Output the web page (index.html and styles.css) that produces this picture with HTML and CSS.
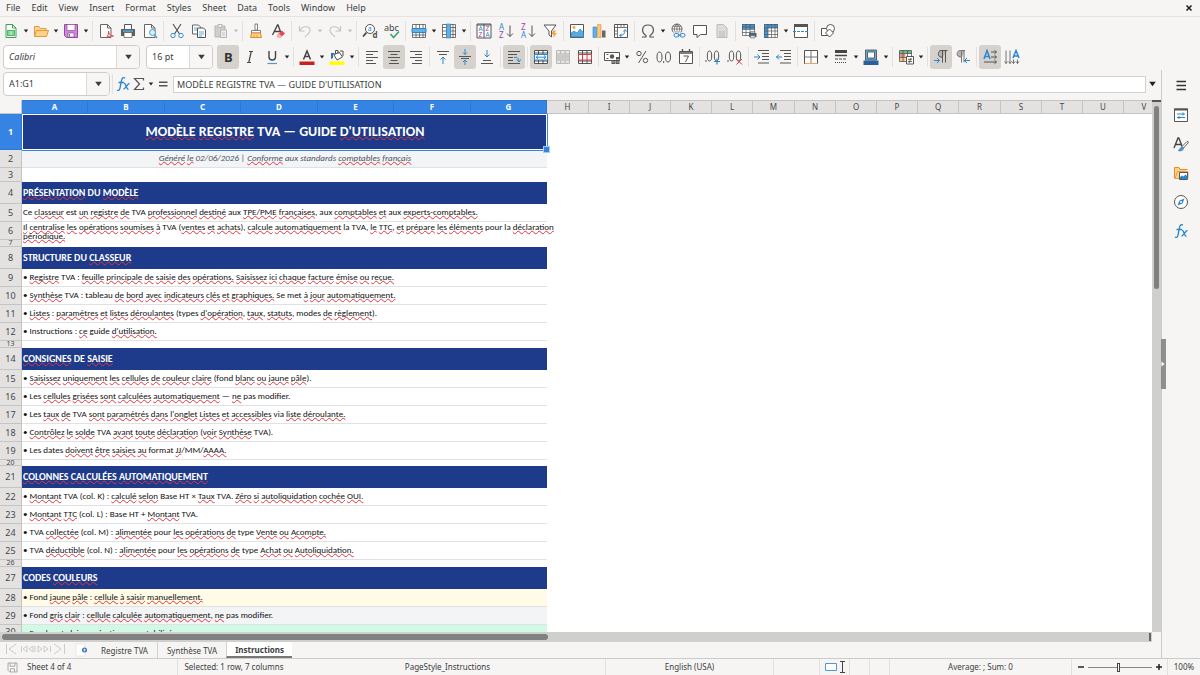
FILE: index.html
```html
<!DOCTYPE html>
<html lang="fr">
<head>
<meta charset="utf-8">
<title>Registre TVA</title>
<link rel="stylesheet" href="styles.css">
</head>
<body>
<svg class="defs" aria-hidden="true">
  <symbol id="dd" viewBox="0 0 6 4"><path d="M.8.5h4.4L3 3.5z" fill="currentColor"/></symbol>
  <symbol id="new" viewBox="0 0 16 16"><path d="M3 1.5h6.500L13 5v9.500H3z" fill="#fff" stroke="#38a352"/><path d="M9.500 1.500V5H13" fill="none" stroke="#38a352"/><path d="M4 7h8v6H4z" fill="#4fb864"/><path d="M5 9h6M5 11h6M8 8v4" stroke="#fff" stroke-width=".7"/></symbol>
  <symbol id="open" viewBox="0 0 16 16"><path d="M1.500 13.500V3.500H6l1.500 2H13v2" fill="#fbd38c" stroke="#e39b3b"/><path d="M1.500 13.500l2-6h12l-2 6z" fill="#fbd38c" stroke="#e39b3b"/></symbol>
  <symbol id="save" viewBox="0 0 16 16"><path d="M1.500 1.500h13v13h-11l-2-2z" fill="#c98bd3" stroke="#9a44a8"/><path d="M4 1.500h8v6H4z" fill="#fff" stroke="#9a44a8" stroke-width=".7"/><path d="M5 10h6v4H5z" fill="#fff" stroke="#9a44a8" stroke-width=".7"/><path d="M6.500 11v2.500" stroke="#777"/></symbol>
  <symbol id="pdf" viewBox="0 0 16 16"><path d="M2.500 1.500h7L13 5v9.500H2.500z" fill="#fbfbfb" stroke="#666"/><path d="M9.500 1.500V5H13" fill="none" stroke="#666"/><path d="M8 15c2-2 3-5 2.500-7 0 3 2 5 5 5-3-.5-5.500.5-7.500 2z" fill="#fff" stroke="#d8434e"/></symbol>
  <symbol id="print" viewBox="0 0 16 16"><path d="M4.500 6V1.500h7V6" fill="#fff" stroke="#555"/><path d="M1 6h14v7H1z" fill="#5b6065"/><path d="M4 9.500h8v5H4z" fill="#fff" stroke="#555" stroke-width=".7"/><path d="M3 8h10" stroke="#5aa7dd" stroke-width="1.500"/></symbol>
  <symbol id="preview" viewBox="0 0 16 16"><path d="M2.500 1.500h7L13 5v9.500H2.500z" fill="#fff" stroke="#666"/><path d="M9.500 1.500V5H13" fill="none" stroke="#666"/><circle cx="10.500" cy="9.500" r="3" fill="#d8ecf9" stroke="#4a9bd3"/><path d="M12.700 11.800L15 15" stroke="#4a9bd3" stroke-width="1.300"/></symbol>
  <symbol id="cut" viewBox="0 0 16 16"><path d="M4 1l6.500 10M12 1L5.500 11" stroke="#555" stroke-width="1.200"/><circle cx="4" cy="12.500" r="2.200" fill="none" stroke="#3a92d5"/><circle cx="12" cy="12.500" r="2.200" fill="none" stroke="#3a92d5"/></symbol>
  <symbol id="copy" viewBox="0 0 16 16"><path d="M1.500 2h6l2 2v7h-8z" fill="#fff" stroke="#666"/><path d="M6.500 5h6l2 2v7.500h-8z" fill="#fff" stroke="#555"/><path d="M3 5h3M3 7h3M8 9h5M8 11h5M8 13h3" stroke="#3a92d5" stroke-width=".8"/></symbol>
  <symbol id="paste" viewBox="0 0 16 16"><path d="M2 3h10v11H2z" fill="#cfcfce" stroke="#b5b5b5"/><path d="M5 1.500h4v3H5z" fill="#eee" stroke="#b5b5b5"/><path d="M7.500 7h6v7.500h-6z" fill="#eee" stroke="#b5b5b5"/><path d="M9 10h3M9 12h3" stroke="#c5c5c5"/></symbol>
  <symbol id="brush" viewBox="0 0 16 16"><path d="M7 1h2.500v6H7z" fill="#fff" stroke="#666" stroke-width=".8"/><path d="M3.500 7.500h9V10h-9z" fill="#fff" stroke="#666" stroke-width=".8"/><path d="M3.500 10h9l1 4.500h-11z" fill="#fbd38c" stroke="#e28e2e"/><path d="M6 12v2M9 12v2" stroke="#e28e2e" stroke-width=".7"/></symbol>
  <symbol id="clear" viewBox="0 0 16 16"><path d="M2.500 12L7.500 2h.5l3 8M4.500 8.500H10" fill="none" stroke="#444" stroke-width="1.300"/><path d="M7 12l5-4.500 3 3-5 4.500H8z" fill="#e44852"/><path d="M7 12l2-1.500 3 3-2 1.500H8z" fill="#f8b1b5"/></symbol>
  <symbol id="undo" viewBox="0 0 16 16"><path d="M2.500 3v5h5M3 7.500C5 3 13 2 13 7.500 13 10 10 12 8 14" fill="none" stroke="#c6c6c5" stroke-width="1.200"/></symbol>
  <symbol id="redo" viewBox="0 0 16 16"><path d="M13.500 3v5h-5M13 7.500C11 3 3 2 3 7.500 3 10 6 12 8 14" fill="none" stroke="#c6c6c5" stroke-width="1.200"/></symbol>
  <symbol id="find" viewBox="0 0 16 16"><circle cx="8" cy="6" r="4.500" fill="#fff" stroke="#555"/><path d="M4.500 9.500L1 13.500" stroke="#444" stroke-width="1.800"/><text x="5.800" y="8.300" font-size="7" fill="#2d86cc">a</text><text x="10.500" y="15" font-size="8" font-weight="bold" fill="#555">d</text></symbol>
  <symbol id="abc" viewBox="0 0 16 16"><text x="0" y="7.500" font-size="9" fill="#444">abc</text><path d="M6.500 11l3 3.500 5.500-6" fill="none" stroke="#38a36c" stroke-width="1.500"/></symbol>
  <symbol id="rowi" viewBox="0 0 16 16"><path d="M1.500 1.500h13v13h-13z" fill="#fff"/><path d="M1.500 1.500h13v13h-13zM1 5.500h14M1 9.500h14M1 12h14M5 1v14M8.500 1v14M12 1v14" fill="none" stroke="#555" stroke-width=".8"/><path d="M1 5.500h14v4H1z" fill="#63b0e8" stroke="#2f83c7"/></symbol>
  <symbol id="coli" viewBox="0 0 16 16"><path d="M1.500 1.500h13v13h-13z" fill="#fff"/><path d="M1.500 1.500h13v13h-13zM1 4.500h14M1 8h14M1 11.500h14M5.500 1v14M9.500 1v14M12 1v14" fill="none" stroke="#555" stroke-width=".8"/><path d="M5.500 1h4v14h-4z" fill="#63b0e8" stroke="#2f83c7" stroke-width=".6"/></symbol>
  <symbol id="sort" viewBox="0 0 16 16"><path d="M1 1h14v14H1z" fill="#fff" stroke="#555"/><path d="M1 2h14M8 1v14" stroke="#555"/><g font-size="6.500"><text x="2.500" y="8.300" fill="#2d86cc">A</text><text x="2.500" y="14.200" fill="#a044a8">Z</text><text x="9.500" y="8.300" fill="#a044a8">Z</text><text x="9.500" y="14.200" fill="#2d86cc">A</text></g></symbol>
  <symbol id="asc" viewBox="0 0 16 16"><g font-size="8"><text x="1" y="7" fill="#2d86cc">A</text><text x="1" y="15" fill="#a044a8">Z</text></g><path d="M12 2.500v11M9 10.500l3 3 3-3" fill="none" stroke="#555"/></symbol>
  <symbol id="desc" viewBox="0 0 16 16"><g font-size="8"><text x="1" y="7" fill="#a044a8">Z</text><text x="1" y="15" fill="#2d86cc">A</text></g><path d="M12 2.500v11M9 10.500l3 3 3-3" fill="none" stroke="#555"/></symbol>
  <symbol id="filter" viewBox="0 0 16 16"><path d="M2 2h12L9.500 8v6L7 12V8z" fill="#fff" stroke="#555"/><path d="M11 7.500h3l-1.500 2.500H15l-4 5 .8-3.500H9.500z" fill="#f6a33c"/></symbol>
  <symbol id="image" viewBox="0 0 16 16"><path d="M1.500 1.500h13v13h-13z" fill="#fff" stroke="#555"/><path d="M2 14v-4l3-2 3 2 3-4 3.500 3.500V14z" fill="#5aaae2" stroke="#2c7cbd" stroke-width=".6"/><circle cx="5" cy="4.500" r="1.400" fill="#f3a33c"/></symbol>
  <symbol id="chart" viewBox="0 0 16 16"><path d="M2 4h3.500v10.500H2z" fill="#63b0e8" stroke="#2f83c7" stroke-width=".6"/><path d="M6.500 1.500H10v13H6.500z" fill="#fbc77b" stroke="#e28e2e" stroke-width=".6"/><path d="M11 7.500h3.500v7H11z" fill="#666"/></symbol>
  <symbol id="pivot" viewBox="0 0 16 16"><path d="M1.500 1.500h13v13h-13z" fill="#fff" stroke="#555"/><path d="M1 4.500h14M4.500 1v14M1 8h3.500M1 11h3.500M8 1v3.500M11 1v3.500" stroke="#555" stroke-width=".8"/><path d="M7 12.500c3 0 5-2 5-5M10.500 8.500l1.500-2 1.500 2M8.500 11l-2 1.500 2 1.500" fill="none" stroke="#2d86cc"/></symbol>
  <symbol id="omega" viewBox="0 0 16 16"><path d="M2 14h4v-1.500C.5 9 2 2 8 2s7.500 7 2 10.500V14h4" fill="none" stroke="#555" stroke-width="1.200"/></symbol>
  <symbol id="link" viewBox="0 0 16 16"><circle cx="7" cy="6" r="5" fill="#fff" stroke="#555" stroke-width=".9"/><path d="M2 6h10M3 3.300h8M7 1v10M7 1C3 4 4 9 7 11M7 1c4 3 3 8 0 10" fill="none" stroke="#555" stroke-width=".7"/><path d="M3 9.500h13V15H3z" fill="#f6f5f4"/><rect x="4" y="10.500" width="5" height="3.500" rx="1.700" fill="none" stroke="#2d86cc"/><rect x="10" y="10.500" width="5" height="3.500" rx="1.700" fill="none" stroke="#2d86cc"/><path d="M7.500 12.200h4" stroke="#2d86cc"/></symbol>
  <symbol id="comment" viewBox="0 0 16 16"><path d="M1.500 2.500h13v9H8.500L5 14.500v-3H1.500z" fill="#fff" stroke="#555"/></symbol>
  <symbol id="page" viewBox="0 0 16 16"><path d="M3 1.500h6.500L13 5v9.500H3z" fill="#dcdcdb" stroke="#bcbcbb"/><path d="M5 9h6M5 11h6M5 13h6" stroke="#bcbcbb"/></symbol>
  <symbol id="parea" viewBox="0 0 16 16"><path d="M1.500 1.500h12v11h-12z" fill="#fff"/><path d="M1 1h13v5H1z" fill="#3f97da"/><path d="M1.500 1.500h12v11h-12zM1 4h13M1 6.500h13M1 9.500h13M5 1v12M9 1v12" fill="none" stroke="#555" stroke-width=".7"/><path d="M8 10h7.500v4H8z" fill="#5b6065"/><path d="M9.500 8.500h4.500V10H9.500zM9.500 12.500h4.500V15H9.500z" fill="#bfe0f6" stroke="#555" stroke-width=".5"/></symbol>
  <symbol id="freeze" viewBox="0 0 16 16"><path d="M1.500 1.500h13v13h-13z" fill="#fff"/><path d="M1 1h14v4H1zM1 5h4v10H1z" fill="#3f97da"/><path d="M1.500 1.500h13v13h-13zM1 5h14M1 8h14M1 11.500h14M5 1v14M8.500 1v14M12 1v14" fill="none" stroke="#555" stroke-width=".7"/></symbol>
  <symbol id="split" viewBox="0 0 16 16"><path d="M1.500 1.500h13v13h-13z" fill="#fff" stroke="#555"/><path d="M1 1h14v3H1z" fill="#555"/><path d="M0 8.500h16" stroke="#2d86cc" stroke-dasharray="3 1"/></symbol>
  <symbol id="shapes" viewBox="0 0 16 16"><path d="M1.500 5.500h7v7h-7z" fill="#fff" stroke="#555"/><circle cx="10.500" cy="5.500" r="4" fill="#fff" stroke="#555"/><path d="M9.500 6l4 4-4 4-4-4z" fill="#fff" stroke="#555"/></symbol>
  <symbol id="bold" viewBox="0 0 16 16"><text x="4" y="13" font-size="13" font-weight="bold" fill="#333">B</text></symbol>
  <symbol id="ital" viewBox="0 0 16 16"><path d="M7 2.500h4M5 13.500h4M9.200 2.500L6.800 13.500" stroke="#444" stroke-width="1.200"/></symbol>
  <symbol id="under" viewBox="0 0 16 16"><path d="M5 2v6c0 4 6.500 4 6.500 0V2" fill="none" stroke="#444" stroke-width="1.400"/><path d="M3.500 14.500h9.500" stroke="#4a9bd3" stroke-width="1.200"/></symbol>
  <symbol id="fcolor" viewBox="0 0 16 16"><path d="M4.500 10.500L8 2l3.500 8.500M5.500 7.500h5" fill="none" stroke="#444" stroke-width="1.500"/><path d="M.500 12.500h15V16H.500z" fill="#c9211e"/></symbol>
  <symbol id="fill" viewBox="0 0 16 16"><path d="M5 6l5-3 3.500 5L8 11z" fill="#fff" stroke="#555"/><path d="M6.500 5V1.500H9V5M11 2h3v5" fill="none" stroke="#555"/><path d="M2 10V4h4l-2 2v3z" fill="#2d6fae"/><path d="M.500 12.500h15V16H.500z" fill="#ff0"/></symbol>
  <symbol id="left" viewBox="0 0 16 16"><path d="M2 2.500h12M2 5.500h7M2 8.500h12M2 11.500h7M2 14.500h10" stroke="#555"/></symbol>
  <symbol id="center" viewBox="0 0 16 16"><path d="M2 2.500h12M4.500 5.500h7M2 8.500h12M4.500 11.500h7M3 14.500h10" stroke="#555"/></symbol>
  <symbol id="right" viewBox="0 0 16 16"><path d="M2 2.500h12M7 5.500h7M2 8.500h12M7 11.500h7M4 14.500h10" stroke="#555"/></symbol>
  <symbol id="top" viewBox="0 0 16 16"><path d="M2 2.500h12M4 5.500h8" stroke="#555"/><path d="M8 15V8M5.500 10.500L8 8l2.500 2.500" fill="none" stroke="#2d86cc"/></symbol>
  <symbol id="mid" viewBox="0 0 16 16"><path d="M2 7.500h12M4 9.500h8" stroke="#555"/><path d="M8 0v5.500M6 3.500l2 2 2-2M8 16v-5M6 13l2-2 2 2" fill="none" stroke="#2d86cc"/></symbol>
  <symbol id="bot" viewBox="0 0 16 16"><path d="M4 11.500h8M2 14.500h12" stroke="#555"/><path d="M8 1v7M5.500 5.500L8 8l2.500-2.500" fill="none" stroke="#2d86cc"/></symbol>
  <symbol id="wrap" viewBox="0 0 16 16"><path d="M2 2.500h12M2 5.500h9M2 8.500h5M2 11.500h5M2 14.500h12" stroke="#555"/><path d="M8 8.500c3-1 5 1 5 4M10.500 10.500l2.500 2.500 2-2.500" fill="none" stroke="#2d86cc"/></symbol>
  <symbol id="merge" viewBox="0 0 16 16"><path d="M1.500 1.500h13v13h-13z" fill="#fff"/><path d="M1.500 1.500h13v13h-13zM5.500 1v14M10 1v14M1 4h14M1 12h14" fill="none" stroke="#444" stroke-width=".9"/><path d="M1.500 5.500h13v5.500h-13z" fill="#fff" stroke="#2d86cc"/><path d="M3 8.200h10M5 6.500L3.200 8.200 5 10M11 6.500l1.800 1.700L11 10" fill="none" stroke="#2d86cc"/></symbol>
  <symbol id="mcell" viewBox="0 0 16 16"><path d="M1.500 1.500h13v13h-13z" fill="#e4e4e3"/><path d="M1.500 1.500h13v13h-13zM5.500 1v4M10 1v4M5.500 11v4M10 11v4M1 5h14M1 11h14" fill="none" stroke="#b5b5b4" stroke-width=".9"/><path d="M2 5.500h12v5H2z" fill="#c9c9c8"/></symbol>
  <symbol id="unmerge" viewBox="0 0 16 16"><path d="M1.500 1.500h13v13h-13z" fill="#fff"/><path d="M1.500 1.500h13v13h-13zM5.500 1v14M10 1v14M1 4h14M1 12h14" fill="none" stroke="#444" stroke-width=".9"/><path d="M1.500 5.500h13V11h-13zM5.500 5.500V11M10 5.500V11" fill="#fff" stroke="#dc3a43"/></symbol>
  <symbol id="money" viewBox="0 0 16 16"><path d="M.500 3.500h15v8H.500z" fill="#fff" stroke="#555"/><circle cx="8" cy="7.500" r="2.200" fill="#555"/><path d="M2.500 5.500h2M2.500 9.500h2" stroke="#555"/><path d="M7.500 11h4v4h-4zM12 8h3.500v7H12z" fill="#555"/><path d="M8 13h3M12.500 10.500h3M12.500 13h3" stroke="#ddd" stroke-width=".7"/></symbol>
  <symbol id="pct" viewBox="0 0 16 16"><circle cx="5" cy="4.500" r="2.200" fill="none" stroke="#555"/><circle cx="11.500" cy="11.500" r="2.200" fill="none" stroke="#555"/><path d="M12 2L4.500 14" stroke="#555"/></symbol>
  <symbol id="num" viewBox="0 0 16 16"><ellipse cx="3.500" cy="8" rx="2.500" ry="5" fill="none" stroke="#555"/><ellipse cx="12" cy="8" rx="2.500" ry="5" fill="none" stroke="#555"/><path d="M7.700 12v2" stroke="#555"/></symbol>
  <symbol id="date" viewBox="0 0 16 16"><path d="M1.500 2.500h13v12h-13z" fill="#fff" stroke="#555"/><path d="M1 4h14M4.500 0v3M11.500 0v3" stroke="#555" stroke-width="1.400"/><path d="M5.500 7h5l-3 6" fill="none" stroke="#555"/></symbol>
  <symbol id="decp" viewBox="0 0 16 16"><ellipse cx="4.500" cy="7" rx="2.200" ry="5" fill="none" stroke="#555"/><ellipse cx="11.500" cy="7" rx="2.200" ry="5" fill="none" stroke="#555"/><path d="M1 11v2" stroke="#555"/><path d="M12 9.500v6M9 12.500h6" stroke="#2d86cc" stroke-width="1.200"/></symbol>
  <symbol id="decm" viewBox="0 0 16 16"><ellipse cx="4.500" cy="7" rx="2.200" ry="5" fill="none" stroke="#555"/><ellipse cx="11.500" cy="7" rx="2.200" ry="5" fill="none" stroke="#555"/><path d="M1 11v2" stroke="#555"/><path d="M9.500 10l5.500 5.500M15 10l-5.500 5.500" stroke="#dc3a43"/></symbol>
  <symbol id="ind" viewBox="0 0 16 16"><path d="M4 1.500h11M8 4.500h7M8 7.500h7M8 10.500h7M4 14h11" stroke="#555"/><path d="M0 8h6M3.500 5.500L6 8l-2.500 2.500" fill="none" stroke="#2d86cc"/></symbol>
  <symbol id="outd" viewBox="0 0 16 16"><path d="M4 1.500h11M8 4.500h7M8 7.500h7M8 10.500h7M4 14h11" stroke="#555"/><path d="M0 8h6M3 5.500L.500 8 3 10.500" fill="none" stroke="#2d86cc"/></symbol>
  <symbol id="border" viewBox="0 0 16 16"><path d="M1.500 1.500h13v13h-13z" fill="#fff" stroke="#555"/><path d="M8 1v14M1 8h14" stroke="#555" stroke-width=".8"/><path d="M2 14.500h12.500" stroke="#f0a35a"/></symbol>
  <symbol id="bstyle" viewBox="0 0 16 16"><path d="M2 2.500h12" stroke="#444" stroke-width="3"/><path d="M2 6.500h12" stroke="#444" stroke-width="1.500"/><path d="M2 10h12" stroke="#444" stroke-dasharray="3 1"/><path d="M2 13.500h12" stroke="#444" stroke-dasharray="1 1"/></symbol>
  <symbol id="bcolor" viewBox="0 0 16 16"><path d="M2.500 1h11v10h-11z" fill="#63b0e8" stroke="#444" stroke-width=".8"/><path d="M4.500 3h7v6h-7z" fill="#fff" stroke="#444" stroke-width=".8"/><path d="M.500 11.500h15V16H.500z" fill="#2a6099"/></symbol>
  <symbol id="cond" viewBox="0 0 16 16"><path d="M1.500 1.500h12v11h-12z" fill="#fff"/><path d="M1.500 1.500h12v3h-12z" fill="#5fbf85"/><path d="M1.500 5h6v3h-6z" fill="#f08b8f"/><path d="M1.500 8.500h6v4h-6z" fill="#fbc77b"/><path d="M1.500 1.500h12v11h-12zM1 4.500h13M1 8.500h8M5 1v12M9.500 1v7" fill="none" stroke="#555" stroke-width=".8"/><path d="M8.500 7.500h7v7.500h-7z" fill="#fff" stroke="#555"/><path d="M10 10.300h4M10 12.500h4M13 9l-2 5" stroke="#444" stroke-width=".8"/></symbol>
  <symbol id="ltr" viewBox="0 0 16 16"><path d="M14.500 1.500H8C4.500 1.500 4.500 8 8 8h1.500" fill="#b9b5b1" stroke="#555"/><path d="M9.500 1.500v12M12.500 1.500v12" stroke="#555"/><path d="M1 11.500h5.500M4 9l2.500 2.500L4 14" fill="none" stroke="#2d86cc"/></symbol>
  <symbol id="rtl" viewBox="0 0 16 16"><path d="M10 1.500H5.500C1 1.500 1 8 5.500 8H7" fill="#b9b5b1" stroke="#777"/><path d="M6.500 1.500v12M9 1.500v12" stroke="#777"/><path d="M9.500 11.500H15M12 9l-2.500 2.500L12 14" fill="none" stroke="#2d86cc"/></symbol>
  <symbol id="tlr" viewBox="0 0 16 16"><path d="M2 10L5 1.500 8 10M3 7.500h4" fill="none" stroke="#2d86cc" stroke-width="1.500"/><path d="M9 3h5.500M9 8h5.500M2 13h12.500M12.500 1.200L14.500 3l-2 1.800M12.500 6.200L14.500 8l-2 1.800M12.500 11.200l2 1.800-2 1.800" fill="none" stroke="#555"/></symbol>
  <symbol id="ttb" viewBox="0 0 16 16"><path d="M9 9l3-7.500L15 9M10 7h4" fill="none" stroke="#2d86cc" stroke-width="1.500"/><path d="M2 1.500v13M6 1.500v13M9.500 10.500v4M13.500 10.500v4M.500 12.500l1.500 2 1.500-2M4.500 12.500l1.500 2 1.500-2M8 12.500l1.500 2 1.500-2M12 12.500l1.500 2 1.500-2" fill="none" stroke="#666" stroke-width=".9"/></symbol>
  <symbol id="fx" viewBox="0 0 16 16"><path d="M10 2.200C8.500.800 7 2 6.500 4.500L5 12c-.4 2.200-1.500 3-3 2M3.500 6.500H9" fill="none" stroke="#2d86cc" stroke-width="1.300"/><path d="M9 7.500c2-.8 2 6 4.500 5.800M14.500 7.300C12.500 7.500 10.500 13 8.500 13" fill="none" stroke="#2d86cc" stroke-width="1.300"/></symbol>
  <symbol id="sigma" viewBox="0 0 16 16"><path d="M12.500 4.500v-2h-9L8.500 8l-5 5.500h9v-2" fill="none" stroke="#555" stroke-width="1.200"/></symbol>
  <symbol id="equal" viewBox="0 0 16 16"><path d="M4 6.300h8.500M4 9.700h8.500" stroke="#555" stroke-width="1.600"/></symbol>
  <symbol id="menu" viewBox="0 0 16 16"><path d="M3.500 3.500h9.500M3.500 7.500h9.500M3.500 11.500h9.500" stroke="#333" stroke-width="1.300"/></symbol>
  <symbol id="props" viewBox="0 0 16 16"><path d="M1.500 2h13v12.500h-13z" fill="#fff" stroke="#555"/><path d="M1 2.500h14" stroke="#555" stroke-width="2"/><path d="M4 7h8M4 10.500h8M10 5.500v3M6 9v3" stroke="#2d86cc"/></symbol>
  <symbol id="styl" viewBox="0 0 16 16"><path d="M1 12L5 2h.8L9 10M2.500 8.500H8" fill="none" stroke="#444" stroke-width="1.400"/><path d="M8.500 11L14 5.500c1.500-.5 1.500.5 1 1.500L10.500 12z" fill="#fff" stroke="#555" stroke-width=".9"/><path d="M5 14.500c2 .2 1.500-3 3.500-3.300 2-.2 2.500 1.500 1.500 2.500-1 1.300-3.500 1.500-5 .8z" fill="#4a9bd3" stroke="#2f73ad" stroke-width=".6"/></symbol>
  <symbol id="gal" viewBox="0 0 16 16"><path d="M1.500 13.500v-11H6l1 2h7.500" fill="#fbd38c" stroke="#e28e2e"/><path d="M2 13.500l2.500-7H15v7z" fill="#fbd38c" stroke="#e28e2e" stroke-width=".8"/><path d="M6.500 7.500h8v7h-8z" fill="#fff" stroke="#555"/><path d="M7 14v-2l2-1.500 1.500 1 2-2 2 2V14z" fill="#2d86cc"/></symbol>
  <symbol id="nav" viewBox="0 0 16 16"><circle cx="8" cy="8" r="6.500" fill="#fff" stroke="#555"/><path d="M11.500 4.500L9.500 9.500l-5 2 2-5z" fill="#2d86cc"/><circle cx="8" cy="8" r="1" fill="#fff"/></symbol>
  <symbol id="gsave" viewBox="0 0 16 16"><path d="M2.500 2.500h11v11h-9l-2-2zM5 2.500v4h6v-4M5.500 13.500v-4h5v4" fill="#fafafa" stroke="#999"/></symbol>
</svg>

<nav class="menubar">
  <button>File</button><button>Edit</button><button>View</button><button>Insert</button><button>Format</button><button>Styles</button><button>Sheet</button><button>Data</button><button>Tools</button><button>Window</button><button>Help</button>
  <button class="close" aria-label="Close"><svg viewBox="0 0 8 8"><path d="M1.500 1.500l5 5M6.500 1.500l-5 5" stroke="#222" stroke-width="1.600"/></svg></button>
</nav>

<div class="toolbar standard">
  <button aria-label="New"><svg><use href="#new"/></svg></button><button class="dd" aria-label="More"><svg><use href="#dd"/></svg></button>
  <button aria-label="Open"><svg><use href="#open"/></svg></button><button class="dd" aria-label="More"><svg><use href="#dd"/></svg></button>
  <button aria-label="Save"><svg><use href="#save"/></svg></button><button class="dd" aria-label="More"><svg><use href="#dd"/></svg></button>
  <i class="sep"></i>
  <button aria-label="Export PDF"><svg><use href="#pdf"/></svg></button>
  <button aria-label="Print"><svg><use href="#print"/></svg></button>
  <button aria-label="Preview"><svg><use href="#preview"/></svg></button>
  <i class="sep"></i>
  <button aria-label="Cut"><svg><use href="#cut"/></svg></button>
  <button aria-label="Copy"><svg><use href="#copy"/></svg></button>
  <button aria-label="Paste" disabled><svg><use href="#paste"/></svg></button><button class="dd" aria-label="More" disabled><svg><use href="#dd"/></svg></button>
  <i class="sep"></i>
  <button aria-label="Clone"><svg><use href="#brush"/></svg></button>
  <button aria-label="Clear"><svg><use href="#clear"/></svg></button>
  <i class="sep"></i>
  <button aria-label="Undo" disabled><svg><use href="#undo"/></svg></button><button class="dd" aria-label="More" disabled><svg><use href="#dd"/></svg></button>
  <button aria-label="Redo" disabled><svg><use href="#redo"/></svg></button><button class="dd" aria-label="More" disabled><svg><use href="#dd"/></svg></button>
  <i class="sep"></i>
  <button aria-label="Find"><svg><use href="#find"/></svg></button>
  <button aria-label="Spelling"><svg><use href="#abc"/></svg></button>
  <i class="sep"></i>
  <button aria-label="Row"><svg><use href="#rowi"/></svg></button><button class="dd" aria-label="More"><svg><use href="#dd"/></svg></button>
  <button aria-label="Column"><svg><use href="#coli"/></svg></button><button class="dd" aria-label="More"><svg><use href="#dd"/></svg></button>
  <i class="sep"></i>
  <button aria-label="Sort"><svg><use href="#sort"/></svg></button>
  <button aria-label="Sort ascending"><svg><use href="#asc"/></svg></button>
  <button aria-label="Sort descending"><svg><use href="#desc"/></svg></button>
  <button aria-label="AutoFilter"><svg><use href="#filter"/></svg></button>
  <i class="sep"></i>
  <button aria-label="Image"><svg><use href="#image"/></svg></button>
  <button aria-label="Chart"><svg><use href="#chart"/></svg></button>
  <button aria-label="Pivot table"><svg><use href="#pivot"/></svg></button>
  <i class="sep"></i>
  <button aria-label="Special character"><svg><use href="#omega"/></svg></button><button class="dd" aria-label="More"><svg><use href="#dd"/></svg></button>
  <button aria-label="Hyperlink"><svg><use href="#link"/></svg></button>
  <button aria-label="Comment"><svg><use href="#comment"/></svg></button>
  <button aria-label="Headers and footers" disabled><svg><use href="#page"/></svg></button>
  <i class="sep"></i>
  <button aria-label="Print area"><svg><use href="#parea"/></svg></button>
  <button aria-label="Freeze"><svg><use href="#freeze"/></svg></button><button class="dd" aria-label="More"><svg><use href="#dd"/></svg></button>
  <button aria-label="Split"><svg><use href="#split"/></svg></button>
  <i class="sep"></i>
  <button aria-label="Draw functions"><svg><use href="#shapes"/></svg></button>
</div>

<div class="toolbar formatting">
  <div class="combo font"><input aria-label="Font name" value="Calibri"><button aria-label="Fonts"><svg><use href="#dd"/></svg></button></div>
  <div class="combo size"><input aria-label="Font size" value="16 pt"><button aria-label="Sizes"><svg><use href="#dd"/></svg></button></div>
  <button class="on" aria-label="Bold"><svg><use href="#bold"/></svg></button>
  <button aria-label="Italic"><svg><use href="#ital"/></svg></button>
  <button aria-label="Underline"><svg><use href="#under"/></svg></button><button class="dd" aria-label="More"><svg><use href="#dd"/></svg></button>
  <i class="sep"></i>
  <button aria-label="Font color"><svg><use href="#fcolor"/></svg></button><button class="dd" aria-label="More"><svg><use href="#dd"/></svg></button>
  <button aria-label="Background"><svg><use href="#fill"/></svg></button><button class="dd" aria-label="More"><svg><use href="#dd"/></svg></button>
  <i class="sep"></i>
  <button aria-label="Left"><svg><use href="#left"/></svg></button>
  <button class="on" aria-label="Center"><svg><use href="#center"/></svg></button>
  <button aria-label="Right"><svg><use href="#right"/></svg></button>
  <i class="sep"></i>
  <button aria-label="Top"><svg><use href="#top"/></svg></button>
  <button class="on" aria-label="Middle"><svg><use href="#mid"/></svg></button>
  <button aria-label="Bottom"><svg><use href="#bot"/></svg></button>
  <i class="sep"></i>
  <button class="on" aria-label="Wrap text"><svg><use href="#wrap"/></svg></button>
  <i class="sep"></i>
  <button class="on" aria-label="Merge and center"><svg><use href="#merge"/></svg></button>
  <button aria-label="Merge cells" disabled><svg><use href="#mcell"/></svg></button>
  <button aria-label="Unmerge cells"><svg><use href="#unmerge"/></svg></button>
  <i class="sep"></i>
  <button aria-label="Currency"><svg><use href="#money"/></svg></button><button class="dd" aria-label="More"><svg><use href="#dd"/></svg></button>
  <button aria-label="Percent"><svg><use href="#pct"/></svg></button>
  <button aria-label="Number"><svg><use href="#num"/></svg></button>
  <button aria-label="Date"><svg><use href="#date"/></svg></button>
  <i class="sep"></i>
  <button aria-label="Add decimal"><svg><use href="#decp"/></svg></button>
  <button aria-label="Remove decimal"><svg><use href="#decm"/></svg></button>
  <i class="sep"></i>
  <button aria-label="Indent"><svg><use href="#ind"/></svg></button>
  <button aria-label="Outdent"><svg><use href="#outd"/></svg></button>
  <i class="sep"></i>
  <button aria-label="Borders"><svg><use href="#border"/></svg></button><button class="dd" aria-label="More"><svg><use href="#dd"/></svg></button>
  <button aria-label="Border style"><svg><use href="#bstyle"/></svg></button><button class="dd" aria-label="More"><svg><use href="#dd"/></svg></button>
  <button aria-label="Border color"><svg><use href="#bcolor"/></svg></button><button class="dd" aria-label="More"><svg><use href="#dd"/></svg></button>
  <i class="sep"></i>
  <button aria-label="Conditional"><svg><use href="#cond"/></svg></button><button class="dd" aria-label="More"><svg><use href="#dd"/></svg></button>
  <i class="sep"></i>
  <button class="on" aria-label="Left to right"><svg><use href="#ltr"/></svg></button>
  <button aria-label="Right to left"><svg><use href="#rtl"/></svg></button>
  <i class="sep"></i>
  <button class="on" aria-label="Text left to right"><svg><use href="#tlr"/></svg></button>
  <button aria-label="Text top to bottom"><svg><use href="#ttb"/></svg></button>
</div>

<div class="work">
  <main class="sheet">
    <div class="formula">
      <div class="combo name"><input aria-label="Name box" value="A1:G1"><button aria-label="Names"><svg><use href="#dd"/></svg></button></div>
      <i class="sep"></i>
      <button aria-label="Function wizard"><svg><use href="#fx"/></svg></button>
      <button aria-label="Sum"><svg><use href="#sigma"/></svg></button><button class="dd" aria-label="More"><svg><use href="#dd"/></svg></button>
      <button aria-label="Formula"><svg><use href="#equal"/></svg></button>
      <input class="content" aria-label="Input line" value="MODÈLE REGISTRE TVA — GUIDE D'UTILISATION">
      <button class="expand" aria-label="Expand"><svg><use href="#dd"/></svg></button>
    </div>
    <div class="gridwrap">
      <div class="grid">
        <table>
          <colgroup><col class="c-head"><col class="c-a"><col class="c-b"><col class="c-a2"><col class="c-b"><col class="c-a2"><col class="c-b"><col class="c-a2"><col class="c-x"><col class="c-w" span="4"><col class="c-x"><col class="c-w" span="4"><col class="c-x"><col class="c-w" span="4"></colgroup>
          <thead><tr><th class="corner"></th><th class="sel">A</th><th class="sel">B</th><th class="sel">C</th><th class="sel">D</th><th class="sel">E</th><th class="sel">F</th><th class="sel">G</th><th>H</th><th>I</th><th>J</th><th>K</th><th>L</th><th>M</th><th>N</th><th>O</th><th>P</th><th>Q</th><th>R</th><th>S</th><th>T</th><th>U</th><th>V</th></tr></thead>
          <tbody>
          <tr class="title"><th class="sel">1</th><td colspan="7"><s>MODÈLE</s> <s>REGISTRE</s> TVA — GUIDE <s>D'UTILISATION</s><span class="cursor"></span></td></tr>
          <tr class="sub"><th>2</th><td colspan="7"><s>Généré</s> <s>le</s> 02/06/2026 | <s>Conforme</s> aux standards <s>comptables</s> <s>français</s></td></tr>
          <tr class="blank"><th>3</th><td colspan="7"></td></tr>
          <tr class="sec"><th>4</th><td colspan="7"><s>PRÉSENTATION</s> DU <s>MODÈLE</s></td></tr>
          <tr><th>5</th><td colspan="7">Ce <s>classeur</s> est <s>un</s> <s>registre</s> <s>de</s> TVA <s>professionnel</s> <s>destiné</s> aux <s>TPE/PME</s> <s>françaises</s>, aux <s>comptables</s> <s>et</s> aux <s>experts-comptables.</s></td></tr>
          <tr class="two"><th>6</th><td colspan="7"><s>Il</s> <s>centralise</s> <s>les</s> <s>opérations</s> <s>soumises</s> <s>à</s> TVA (<s>ventes</s> <s>et</s> <s>achats</s>), <s>calcule</s> <s>automatiquement</s> la TVA, <s>le</s> <s>TTC</s>, <s>et</s> <s>prépare</s> <s>les</s> <s>éléments</s> pour la <s>déclaration</s><br><s>périodique.</s></td></tr>
          <tr class="thin"><th>7</th><td colspan="7"></td></tr>
          <tr class="sec"><th>8</th><td colspan="7">STRUCTURE DU <s>CLASSEUR</s></td></tr>
          <tr><th>9</th><td colspan="7">• <s>Registre</s> TVA : <s>feuille</s> <s>principale</s> <s>de</s> <s>saisie</s> <s>des</s> <s>opérations.</s> <s>Saisissez</s> <s>ici</s> <s>chaque</s> <s>facture</s> <s>émise</s> <s>ou</s> <s>reçue.</s></td></tr>
          <tr><th>10</th><td colspan="7">• <s>Synthèse</s> TVA : tableau <s>de</s> <s>bord</s> <s>avec</s> <s>indicateurs</s> <s>clés</s> <s>et</s> <s>graphiques.</s> Se met <s>à</s> <s>jour</s> <s>automatiquement.</s></td></tr>
          <tr><th>11</th><td colspan="7">• <s>Listes</s> : <s>paramètres</s> <s>et</s> <s>listes</s> <s>déroulantes</s> (types <s>d'opération</s>, <s>taux</s>, <s>statuts</s>, modes <s>de</s> <s>règlement</s>).</td></tr>
          <tr><th>12</th><td colspan="7">• Instructions : <s>ce</s> guide <s>d'utilisation.</s></td></tr>
          <tr class="thin"><th>13</th><td colspan="7"></td></tr>
          <tr class="sec"><th>14</th><td colspan="7"><s>CONSIGNES</s> DE <s>SAISIE</s></td></tr>
          <tr><th>15</th><td colspan="7">• <s>Saisissez</s> <s>uniquement</s> <s>les</s> <s>cellules</s> <s>de</s> <s>couleur</s> <s>claire</s> (fond <s>blanc</s> <s>ou</s> <s>jaune</s> <s>pâle</s>).</td></tr>
          <tr><th>16</th><td colspan="7">• Les <s>cellules</s> <s>grisées</s> <s>sont</s> <s>calculées</s> <s>automatiquement</s> — <s>ne</s> pas modifier.</td></tr>
          <tr><th>17</th><td colspan="7">• Les <s>taux</s> <s>de</s> TVA <s>sont</s> <s>paramétrés</s> <s>dans</s> <s>l'onglet</s> <s>Listes</s> <s>et</s> <s>accessibles</s> via <s>liste</s> <s>déroulante.</s></td></tr>
          <tr><th>18</th><td colspan="7">• <s>Contrôlez</s> <s>le</s> <s>solde</s> TVA <s>avant</s> <s>toute</s> <s>déclaration</s> (<s>voir</s> <s>Synthèse</s> TVA).</td></tr>
          <tr><th>19</th><td colspan="7">• Les dates <s>doivent</s> <s>être</s> <s>saisies</s> <s>au</s> format <s>JJ</s>/MM/<s>AAAA.</s></td></tr>
          <tr class="thin tight"><th>20</th><td colspan="7"></td></tr>
          <tr class="sec"><th>21</th><td colspan="7"><s>COLONNES</s> <s>CALCULÉES</s> <s>AUTOMATIQUEMENT</s></td></tr>
          <tr><th>22</th><td colspan="7">• <s>Montant</s> TVA (col. K) : <s>calculé</s> <s>selon</s> Base HT × <s>Taux</s> TVA. <s>Zéro</s> <s>si</s> <s>autoliquidation</s> <s>cochée</s> <s>OUI.</s></td></tr>
          <tr><th>23</th><td colspan="7">• <s>Montant</s> <s>TTC</s> (col. L) : Base HT + <s>Montant</s> TVA.</td></tr>
          <tr><th>24</th><td colspan="7">• TVA <s>collectée</s> (col. M) : <s>alimentée</s> pour <s>les</s> <s>opérations</s> <s>de</s> type <s>Vente</s> <s>ou</s> <s>Acompte.</s></td></tr>
          <tr><th>25</th><td colspan="7">• TVA <s>déductible</s> (col. N) : <s>alimentée</s> pour <s>les</s> <s>opérations</s> <s>de</s> type <s>Achat</s> <s>ou</s> <s>Autoliquidation.</s></td></tr>
          <tr class="thin"><th>26</th><td colspan="7"></td></tr>
          <tr class="sec"><th>27</th><td colspan="7">CODES <s>COULEURS</s></td></tr>
          <tr class="yellow"><th>28</th><td colspan="7">• Fond <s>jaune</s> <s>pâle</s> : <s>cellule</s> <s>à</s> <s>saisir</s> <s>manuellement.</s></td></tr>
          <tr class="gray"><th>29</th><td colspan="7">• Fond <s>gris</s> <s>clair</s> : <s>cellule</s> <s>calculée</s> <s>automatiquement</s>, <s>ne</s> pas modifier.</td></tr>
          <tr class="green"><th>30</th><td colspan="7">• Fond <s>vert</s> <s>clair</s> : <s>opération</s> <s>comptabilisée.</s></td></tr>
          </tbody>
        </table>
      </div>
      <div class="vscroll"><div class="vthumb"></div></div>
    </div>
    <div class="hscroll"><div class="hthumb"></div><i></i></div>
    <div class="tabs">
      <svg class="tabnav" viewBox="0 0 62 12"><path d="M1.500 1v10M11 1L4 6l7 5M22 3l-4 3 4 3zM28 3l-4 3 4 3zM33 3l4 3-4 3zM39 3l4 3-4 3zM49 1l7 5-7 5M59.500 1v10M16.500 3v6M30 3v6M45.500 3v6" fill="none" stroke="#cbcbca"/></svg>
      <button class="add" aria-label="Add sheet"><svg viewBox="0 0 12 14"><path d="M1 1h9v12H1z" fill="#fff" stroke="#ddd" stroke-width=".6"/><circle cx="9.500" cy="7" r="2.500" fill="#2d6fc4"/><path d="M8 7h3M9.500 5.500v3" stroke="#fff" stroke-width=".7"/></svg></button>
      <button>Registre TVA</button><button>Synthèse TVA</button><button class="active">Instructions</button>
    </div>
  </main>
  <aside class="sidebar">
    <button aria-label="Settings"><svg><use href="#menu"/></svg></button>
    <button aria-label="Properties"><svg><use href="#props"/></svg></button>
    <button aria-label="Styles"><svg><use href="#styl"/></svg></button>
    <button aria-label="Gallery"><svg><use href="#gal"/></svg></button>
    <button aria-label="Navigator"><svg><use href="#nav"/></svg></button>
    <button aria-label="Functions"><svg><use href="#fx"/></svg></button>
    <button class="grip" aria-label="Hide"><svg viewBox="0 0 4 6"><path d="M.500.500L3.500 3 .500 5.500z" fill="#fff"/></svg></button>
  </aside>
</div>

<footer class="status">
  <span class="ico"><svg><use href="#gsave"/></svg></span>
  <span class="count">Sheet 4 of 4</span>
  <span class="chosen">Selected: 1 row, 7 columns</span>
  <span class="style">PageStyle_Instructions</span>
  <span class="lang">English (USA)</span>
  <span class="ins"></span>
  <span class="mode"><svg viewBox="0 0 22 14"><path d="M1.500 3.500h11v7h-11z" fill="#fff" stroke="#4a9bd3"/><path d="M16 1.500h5M16 12.500h5M18.500 1.500v11" stroke="#444"/></svg></span>
  <span class="slot"></span>
  <span class="slot"></span>
  <span class="sum">Average: ; Sum: 0</span>
  <span class="zoom"><button aria-label="Zoom out"><svg viewBox="0 0 8 8"><path d="M1 4h6" stroke="#222" stroke-width="1.500"/></svg></button><input type="range" aria-label="Zoom" min="0" max="200" value="98"><button aria-label="Zoom in"><svg viewBox="0 0 8 8"><path d="M1 4h6M4 1v6" stroke="#222" stroke-width="1.500"/></svg></button></span>
  <span class="pct">100%</span>
</footer>
</body>
</html>
```
FILE: styles.css
```css
* { box-sizing: border-box; }
body {
  margin: 0;
  height: 100vh;
  display: flex;
  flex-direction: column;
  overflow: hidden;
  background: #f6f5f4;
  color: #3a3d40;
  font: 9px/12px "Noto Sans", sans-serif;
}
button {
  border: 0;
  padding: 0;
  background: none;
  color: inherit;
  font: inherit;
}
input { min-width: 0; font: inherit; color: inherit; }
svg { display: block; width: 16px; height: 16px; }
.defs { display: none; }

.menubar {
  display: flex;
  flex: none;
  height: 17px;
  gap: 11px;
  padding: 0 7px 0 6px;
  border-bottom: 1px solid #e4e3e1;
}
.close { margin-left: auto; }
.close svg { width: 8px; height: 8px; }

.toolbar { display: flex; flex: none; align-items: center; }
.standard { height: 27px; }
.formatting { height: 26px; padding-left: 3px; }
.toolbar button, .formula > button {
  flex: none;
  display: flex;
  align-items: center;
  justify-content: center;
  width: 22px;
  height: 24px;
}
.toolbar .on { background: #d5d1cd; border-radius: 3px; }
.toolbar .dd, .formula > .dd { width: 8px; color: #222; }
.dd svg { width: 6px; height: 4px; }
.toolbar .dd:disabled { color: #c0c0bf; }
.sep { flex: none; width: 1px; height: 20px; margin: 0 2px; background: #e3e1df; }

.combo {
  display: flex;
  flex: none;
  height: 24px;
  background: #fff;
  border: 1px solid #cfccc9;
  border-radius: 4px;
  overflow: hidden;
}
.combo input { flex: 1; border: 0; padding: 0 5px; background: none; }
.combo button, .toolbar .combo button {
  display: flex;
  align-items: center;
  justify-content: center;
  width: 23px;
  height: 22px;
  background: #f7f6f5;
  border-left: 1px solid #dcdad8;
}
.combo svg { width: 9px; height: 6px; }
.combo.font { width: 137px; margin-right: 6px; font-style: italic; }
.combo.size { width: 67px; margin-right: 4px; }
.combo.name { width: 107px; }

.work { flex: 1; min-height: 0; display: flex; }
.sheet { flex: 1; min-width: 0; display: flex; flex-direction: column; }
.formula {
  flex: none;
  display: flex;
  align-items: center;
  height: 30px;
  padding: 0 0 2px 3px;
}
.formula > button { width: 16px; }
.formula .content {
  flex: 1;
  height: 17px;
  margin-left: 2px;
  padding: 0 3px;
  border: 1px solid #d3d1cf;
  background: #fff;
}
.formula > .expand { width: 13px; margin-right: 2px; color: #222; }
.expand svg { width: 9px; height: 6px; }

.gridwrap { flex: 1; min-height: 0; display: flex; }
.grid { flex: 1; min-width: 0; overflow: hidden; background: #fff; }
table { table-layout: fixed; width: 1165px; border-collapse: separate; border-spacing: 0; }
.c-head { width: 22px; }
.c-a { width: 66px; }
.c-b { width: 77px; }
.c-a2 { width: 76px; }
.c-w { width: 41px; }
.c-x { width: 42px; }
th {
  padding: 0;
  height: 18px;
  background: #e3e2e1;
  border-right: 1px solid #c5c4c3;
  border-bottom: 1px solid #c5c4c3;
  color: #44474a;
  font-weight: 400;
  line-height: 8px;
}
tbody th { padding-top: 1px; }
thead th { height: 14px; font-size: 8px; line-height: 12px; border-top: 1px solid #c5c4c3; }
th.sel {
  background: #3584e4;
  border-color: #2f78d2;
  color: #fff;
  font-weight: 700;
}
thead .corner { background: #f6f5f4; border-top-color: #f6f5f4; }
td {
  position: relative;
  height: 18px;
  padding: 0 0 2px 1px;
  border-bottom: 1px solid #dfe1e4;
  color: #111;
  font: 9px/9px Carlito, Lato, sans-serif;
  white-space: nowrap;
}
s {
  text-decoration: underline wavy #e2343c 1px;
  text-decoration-skip-ink: none;
  text-underline-offset: 0;
}
.title td {
  height: 36px;
  background: #1e3a8a;
  border: 0;
  color: #fff;
  font-size: 14px;
  font-weight: 700;
  text-align: center;
}
.cursor {
  position: absolute;
  z-index: 1;
  inset: 0;
  border: 1px solid #fff;
  box-shadow: 0 1px #3584e4, 1px 0 #3584e4, 1px 1px #3584e4;
}
.cursor::after {
  content: "";
  position: absolute;
  right: -4px;
  bottom: -4px;
  width: 5px;
  height: 5px;
  background: #3584e4;
  border: 1px solid #a9c8f2;
}
.sub td { background: #f3f4f6; color: #4b5563; font-style: italic; text-align: center; }
.blank th, .blank td { height: 14px; }
.sec th, .sec td { height: 22px; }
.sec td { background: #1e3a8a; border: 0; color: #fff; font-size: 10px; font-weight: 700; }
.thin th, .thin td { height: 7px; padding: 0; font-size: 7px; line-height: 6px; }
.tight th, .tight td { height: 6px; line-height: 5px; }
.thin td, .blank td { border-bottom-color: #fff; }
.two td { padding-bottom: 0; border-bottom: 0; }
.yellow td { background: #fffbe6; }
.gray td { background: #f3f4f6; }
.green td { background: #d1fae5; }
.green th, .green td { padding-top: 0; padding-bottom: 3px; }

.vscroll {
  flex: none;
  width: 9px;
  padding: 4px 2px;
  background: #cfcfce;
  border-top: 2px solid #555;
}
.vthumb { height: 35%; border-radius: 3px; background: #7f807f; }
.hscroll {
  flex: none;
  display: flex;
  align-items: center;
  justify-content: space-between;
  height: 10px;
  margin-right: 9px;
  padding: 0 1px 0 2px;
  background: #cfcfce;
}
.hthumb { width: 47.5%; height: 6px; border-radius: 3px; background: #7f807f; }
.hscroll i { width: 2px; height: 8px; background: #666; }

.tabs { flex: none; display: flex; height: 16px; padding-left: 5px; font-size: 8px; }
.tabs button { padding: 0 9px; border-left: 1px solid #d3d1cf; line-height: 13px; }
.tabs .tabnav { width: 62px; height: 12px; margin-top: 1px; }
.tabs .add { padding: 0; margin: 0 5px 0 8px; border: 0; }
.tabs .add + button { border: 0; }
.add svg { width: 12px; height: 14px; }
.tabs .active {
  padding: 0 8px;
  background: #fff;
  border-bottom: 2px solid #777;
  font-weight: 700;
}

.sidebar {
  position: relative;
  flex: none;
  display: flex;
  flex-direction: column;
  align-items: center;
  gap: 13px;
  width: 39px;
  padding-top: 8px;
  border-left: 1px solid #cdcbc9;
}
.grip {
  position: absolute;
  left: -1px;
  top: 269px;
  width: 5px;
  height: 50px;
  background: #8f8f8e;
}
.grip svg { width: 4px; height: 6px; }

.status {
  flex: none;
  display: flex;
  height: 17px;
  border-top: 1px solid #cdcbc9;
  font-size: 8px;
}
.status > span {
  display: flex;
  flex: none;
  align-items: center;
  justify-content: center;
  border-right: 1px solid #e3e1df;
}
.status .ico { width: 24px; border: 0; }
.ico svg { width: 13px; height: 13px; }
.status .count { width: 154px; padding-left: 3px; justify-content: flex-start; }
.status .chosen { width: 112px; border: 0; }
.status .style { flex: 1; }
.lang { width: 168px; }
.ins { width: 46px; }
.mode { width: 30px; }
.mode svg { width: 22px; height: 14px; }
.slot { width: 20px; }
.sum { width: 182px; }
.zoom { width: 96px; gap: 3px; }
.zoom svg { width: 8px; height: 8px; }
.zoom input {
  appearance: none;
  width: 64px;
  height: 10px;
  margin: 0;
  background: linear-gradient(#888, #888) center / 100% 1px no-repeat;
}
.zoom input::-webkit-slider-thumb {
  appearance: none;
  width: 3px;
  height: 9px;
  background: #fff;
  border: 1px solid #444;
}
.status .pct { width: 32px; border: 0; }
```
